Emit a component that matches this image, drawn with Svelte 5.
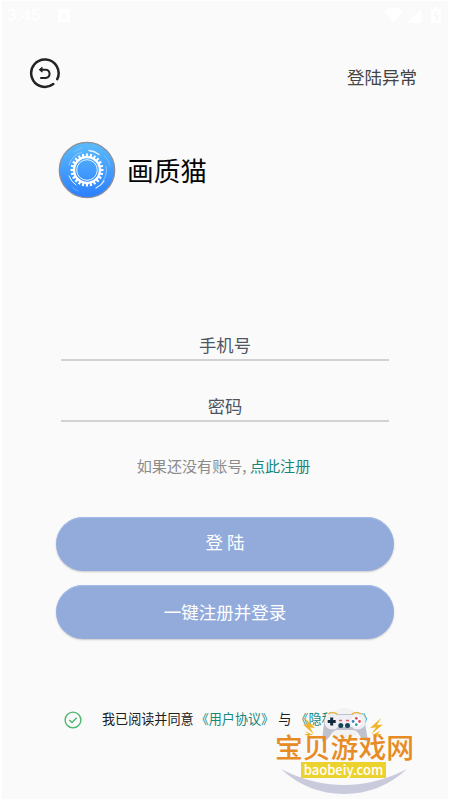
<script lang="ts">
  let phone: string = "";
  let password: string = "";
  let agreed: boolean = true;

  // gear teeth, in degrees
  const teeth = Array.from({ length: 24 }, (_, i) => i * 15);

  function toggle() {
    agreed = !agreed;
  }
</script>

<main class="screen">
  <div class="status">
    <span class="time">3:45</span>
    <svg class="app-mark" width="12" height="13" viewBox="0 0 12 13">
      <rect width="12" height="13" rx="2" fill="#fff" />
      <path d="M3.500 9 6 4l2.500 5z" fill="none" stroke="#f7f7f7" />
    </svg>
    <svg class="signals" width="58" height="18" viewBox="0 0 58 18">
      <path d="M0 5Q9.500-2 19 5L9.500 17z" fill="#fff" />
      <path d="M23 17 37 3v14z" fill="#fff" />
      <path d="M47 3h3V1h4v2h3v14H47z" fill="#fff" />
      <path d="m53 5-3 5h4l-2 5" fill="none" stroke="#f4f4f4" />
    </svg>
  </div>

  <header>
    <button class="back" aria-label="返回">
      <svg width="32" height="32" viewBox="0 0 32 32" fill="none" stroke="#222" stroke-linecap="round">
        <path d="M24.300 27A13.700 13.700 0 1 1 28.200 22.200" stroke-width="2.500" />
        <path d="M11.500 12.700H17a4.200 4.200 0 0 1 0 8.300h-5" stroke-width="2" />
        <path d="m12.800 10.500-2.500 2.200 2.500 2.200z" fill="#222" stroke-width="1" />
      </svg>
    </button>
    <span class="trouble">登陆异常</span>
  </header>

  <section class="brand">
    <svg width="58" height="58" viewBox="0 0 58 58">
      <defs>
        <linearGradient id="blue" x1="0" y1="0" x2="0" y2="1">
          <stop offset="0" stop-color="#5cbbfa" />
          <stop offset="1" stop-color="#2c7fff" />
        </linearGradient>
      </defs>
      <circle cx="29" cy="29" r="27.700" fill="url(#blue)" stroke="#8b8f98" stroke-width="1.300" />
      <g fill="none" stroke="#9bd2ff" stroke-width=".8" stroke-linecap="round">
        <path d="M11 24a19 19 0 0 1 13-13" />
        <path d="M48 25a19 19 0 0 1-3 15" />
        <path d="M16 11a22 22 0 0 1 8-4" opacity=".6" />
        <path d="M47 15a22 22 0 0 1 5 10" opacity=".6" />
        <path d="M14 46a22 22 0 0 0 6 4" opacity=".6" />
      </g>
      <g fill="none" stroke="#e9f6ff" stroke-width="1.300" stroke-linecap="round">
        <path d="M31 9.500a19 19 0 0 1 10 4" />
        <path d="M46 40a19 19 0 0 1-8 7" />
        <path d="M11 35a19 19 0 0 0 7 9" stroke-width="1" />
      </g>
      <g stroke="#fff" stroke-width="2.200">
        {#each teeth as angle}
          <path d="M29 12.500v4" transform="rotate({angle} 29 29)" />
        {/each}
      </g>
      <circle cx="29" cy="29" r="12.900" fill="none" stroke="#fff" stroke-width="2.200" />
      <circle cx="29" cy="29" r="10.300" fill="none" stroke="#e4f3ff" stroke-width="1" />
    </svg>
    <h1>画质猫</h1>
  </section>

  <form on:submit|preventDefault>
    <input type="text" placeholder="手机号" bind:value={phone} />
    <input type="password" placeholder="密码" bind:value={password} />
    <p class="hint">如果还没有账号, <a href="#register">点此注册</a></p>
    <button class="pill login">登 陆</button>
    <button class="pill" type="button">一键注册并登录</button>
  </form>

  <footer>
    <button class="check" aria-label="同意" on:click={toggle}>
      <svg width="18" height="18" viewBox="0 0 18 18" fill="none" stroke="#4db56c" stroke-width="1.400">
        <circle cx="9" cy="9" r="7.900" />
        {#if agreed}
          <path d="m5.300 9 2.700 2.500 4.700-4.700" />
        {/if}
      </svg>
    </button>
    <span class="agree">我已阅读并同意</span>
    <a class="terms" href="#terms">《用户协议》</a>
    <span class="and">与</span>
    <a class="privacy" href="#privacy">《隐私政策》</a>
  </footer>

  <div class="stamp">
    <svg width="146" height="94" viewBox="0 0 146 94">
      <circle cx="70.500" cy="21" r="16" fill="#f2f2f3" />
      <path d="M7 66Q34 91 70 91Q106 91 133 66Q102 82 70 82Q38 82 7 66z" fill="#c9cbdc" />
      <g fill="#f0b52d">
        <path d="m107 15-11 10 6-.5-5 7 12-10-6 .5z" />
        <path d="m106 28-8 4 4 0-3 4 9-5-4 0z" />
        <path d="m31 15 10 10-5-.5 4 7-11-10 5 .5z" />
        <path d="m31 28 8 4-4 0 5 4-10-5 4 0z" />
      </g>
      <path d="M58 11q-7 0-8 9l-2 18q4 1 8-5 3-6 7-6h16q4 0 7 6 4 6 8 5l-3-18q-1-9-8-9z" fill="#bfc2ce" />
      <path d="M58 10q-7 0-7.500 8 0 8 7.500 8.500 4 .2 6-2.500h14q2 3 6 2.500 7.500-.5 7.500-8.500-.5-8-8.500-8-3 0-5 2H63q-2-2-5-2z" fill="#eeeff5" />
      <path d="M54 11q4-3 9 0M78 11q5-3 9 0" fill="none" stroke="#ebb43e" stroke-width="1.500" />
      <path d="M57.700 14.500v8M53.700 18.500h8" stroke="#142b3c" stroke-width="3" />
      <circle cx="66.800" cy="22.500" r="2.500" fill="#14465a" />
      <circle cx="73.500" cy="22.500" r="2.500" fill="#14465a" />
      <path d="M65 17.500h3M72 17.500h3" stroke="#df5a67" stroke-width="1.300" />
      <circle cx="82.300" cy="18.500" r="5.200" fill="#fff" />
      <circle cx="82.300" cy="15.300" r="1.400" fill="#df4754" />
      <circle cx="82.300" cy="21.700" r="1.400" fill="#2b9b9d" />
      <circle cx="79.100" cy="18.500" r="1.400" fill="#367fc1" />
      <circle cx="85.500" cy="18.500" r="1.400" fill="#de4b62" />
    </svg>
    <strong>宝贝游戏网</strong>
    <span>baobeiy.com</span>
  </div>
</main>

<style>
  :global(body) {
    margin: 0;
    background: #fff;
  }
  .screen {
    position: relative;
    box-sizing: border-box;
    width: 450px;
    height: 800px;
    overflow: hidden;
    border: 1px solid #fff;
    border-width: 1px 2px;
    background: #fafafa;
    font-family: "Noto Sans CJK SC", sans-serif;
  }
  button {
    padding: 0;
    border: 0;
    background: none;
    font: inherit;
    cursor: pointer;
  }
  a {
    color: #16877c;
    text-decoration: none;
  }
  svg {
    display: block;
    flex: none;
  }
  .status {
    display: flex;
    align-items: center;
    height: 28px;
    padding: 0 6px 0 5px;
    color: #fff;
  }
  .time {
    width: 51px;
    font: 500 17px Roboto, sans-serif;
  }
  .signals {
    margin-left: auto;
  }
  header {
    display: flex;
    justify-content: space-between;
    height: 48px;
    padding: 28px 31px 0 27px;
  }
  .back {
    height: 32px;
  }
  .trouble {
    margin-top: 7px;
    color: #444;
    font-size: 17.5px;
    line-height: 26px;
  }
  .brand {
    display: flex;
    align-items: center;
    height: 58px;
    margin: 36px 0 0 56px;
  }
  h1 {
    margin: 0 0 0 11px;
    color: #050505;
    font-size: 26.7px;
    font-weight: 400;
    line-height: 40px;
  }
  form {
    display: flex;
    flex-direction: column;
    align-items: center;
    padding-top: 128px;
  }
  input {
    box-sizing: border-box;
    width: 328px;
    height: 34px;
    margin-bottom: 27px;
    padding: 3px 0 0;
    border: 0;
    border-bottom: 2px solid #d2d2d2;
    outline: 0;
    background: none;
    color: #4c5665;
    font: 17.3px "Noto Sans CJK SC", sans-serif;
    text-align: center;
  }
  input::placeholder {
    color: #4c5665;
    opacity: 1;
  }
  .hint {
    margin: 4px 3px 40px 0;
    color: #8b8b8b;
    font-size: 15.1px;
    line-height: 24px;
  }
  .pill {
    width: 338px;
    height: 54px;
    margin-bottom: 14px;
    border-radius: 27px;
    background: #92abdb;
    box-shadow: 0 1px 2px #0003, inset 0 1px 1px #a6bfeb;
    color: #fff;
    font-size: 17.5px;
  }
  .login {
    padding-bottom: 5px;
  }
  .pill:last-child {
    padding-bottom: 2px;
  }
  footer {
    display: flex;
    align-items: center;
    height: 26px;
    margin: 52px 0 0 62px;
    color: #202020;
    font-size: 13.1px;
    white-space: nowrap;
  }
  .check {
    margin-top: 3px;
  }
  .agree {
    margin-left: 20px;
  }
  .terms {
    margin-left: 2px;
  }
  .and {
    margin-left: 4px;
  }
  .privacy {
    margin-left: 4px;
  }
  /* site stamp lies over the agreement row */
  .stamp {
    position: absolute;
    top: 702px;
    left: 272px;
    width: 146px;
    height: 96px;
  }
  .stamp svg,
  .stamp strong,
  .stamp span {
    position: absolute;
  }
  .stamp strong {
    top: 29px;
    left: 1px;
    color: #e78b25;
    font-size: 27.8px;
    font-weight: 500;
    line-height: 28px;
    white-space: nowrap;
  }
  .stamp span {
    top: 59px;
    left: 27px;
    width: 85px;
    height: 16px;
    background: #ecd22d;
    color: #fff;
    font: 500 13px/15px "Noto Sans CJK SC", sans-serif;
    text-align: center;
  }
</style>
